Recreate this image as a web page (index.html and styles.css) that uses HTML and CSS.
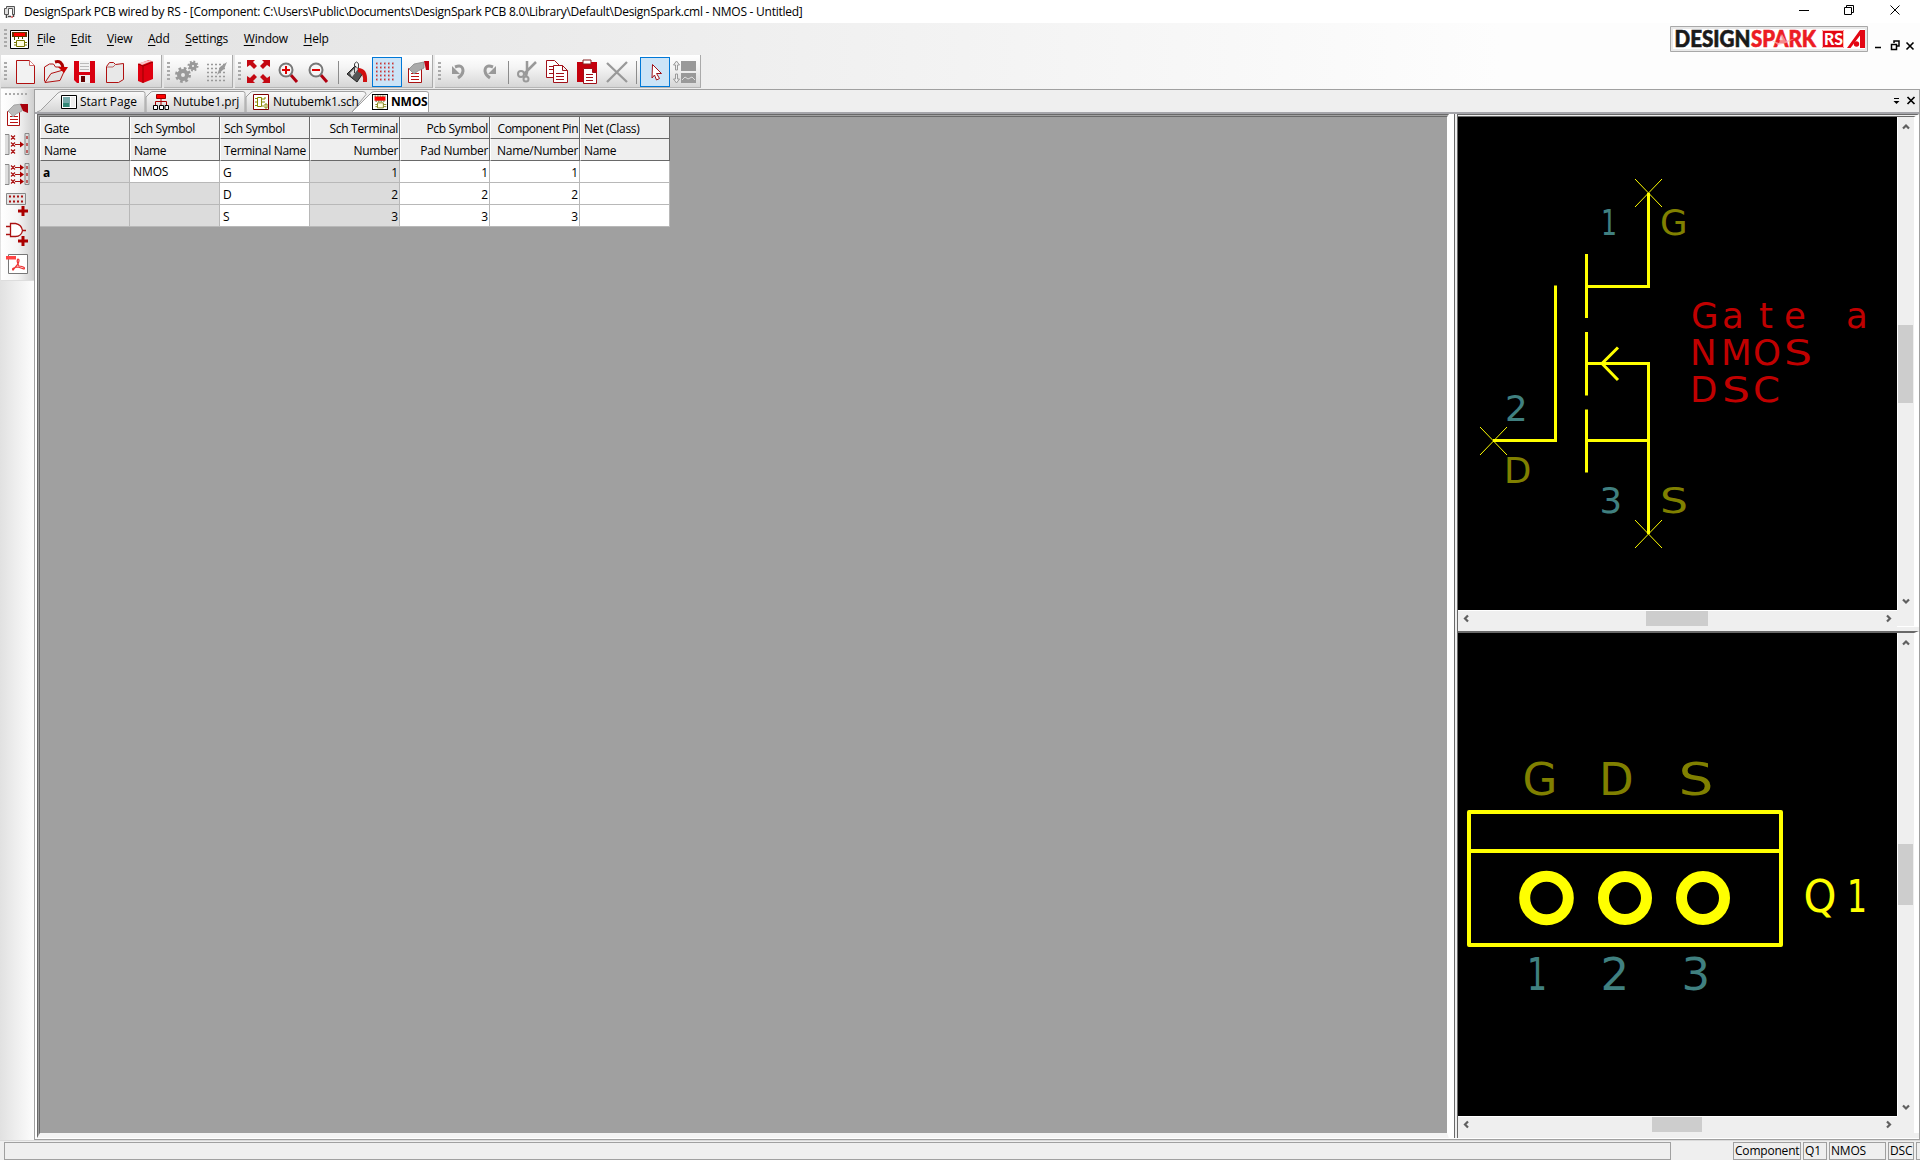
FILE: index.html
```html
<!DOCTYPE html>
<html lang="en">
<head>
<meta charset="utf-8">
<title>DesignSpark PCB</title>
<link rel="stylesheet" href="styles.css">
</head>
<body>
<header class="titlebar">
  <svg class="app-icon" viewBox="4 4 12 14"><path d="M6.500 5.500h8v8h-2v-6h-4v6h-4v-6h2z" fill="#ddd" stroke="#555"/><path d="M6.500 14v3M8 15.500h3M13.500 13v3" stroke="#444" stroke-width="1.500"/><path d="M11 16h2" stroke="#c00"/></svg>
  <span class="title-text">DesignSpark PCB wired by RS - [Component: C:\Users\Public\Documents\DesignSpark PCB 8.0\Library\Default\DesignSpark.cml - NMOS - Untitled]</span>
  <svg class="win-buttons" viewBox="1790 0 120 23" fill="none" stroke="#000"><path d="M1799 10.500h10M1844.500 7.500h7v7h-7zM1846.500 7v-1.500h7v7H1852M1890.500 5.500l9 9M1899.500 5.500l-9 9"/></svg>
</header>
<nav class="menubar">
  <i class="grip"></i>
  <svg class="doc-icon" viewBox="0 0 19 19"><path d="M.5.5h18v18H.5z" fill="#fff" stroke="#000"/><path d="M2 2h15v5H2z" fill="#630"/><path d="M4 3h11v3H4z" fill="#f00"/><path d="M4.500 7v3M8.500 7v2M12.500 7v2" stroke="#450"/><path d="M6.500 10.500h8v6h-8zM4 12.500h2M4 15h2M15 12.500h2M15 15h2" fill="#fffde0" stroke="#770"/></svg>
  <span class="mi"><u>F</u>ile</span><span class="mi"><u>E</u>dit</span><span class="mi"><u>V</u>iew</span><span class="mi"><u>A</u>dd</span><span class="mi"><u>S</u>ettings</span><span class="mi"><u>W</u>indow</span><span class="mi"><u>H</u>elp</span>
  <svg class="brand" viewBox="1670 26 198 26">
    <path d="M1670.500 26.500h197v25h-197z" fill="#e9e9e9" stroke="#a8a8a8"/><path d="M1673 29h192v20h-192z" fill="#fff"/>
    <text x="1674.500" y="47" textLength="76" lengthAdjust="spacingAndGlyphs" class="logo-a">DESIGN</text>
    <text x="1751" y="47" textLength="65" lengthAdjust="spacingAndGlyphs" class="logo-b">SPARK</text>
    <path d="M1782 34l-3 9-8-3 7 5 8-2 10-5-10 3z" fill="#f9b3b3" opacity=".7"/>
    <path d="M1822 30h22v18h-22z" fill="#e30613"/><path d="M1822.500 30.500h21v17h-21z" fill="none" stroke="#fbb"/>
    <text x="1824" y="45" textLength="19" lengthAdjust="spacingAndGlyphs" class="logo-c">RS</text>
    <path d="M1847 48l13-18h5v18h-5v-12.500l-9.500 12.500z" fill="#e30613"/><circle cx="1856.500" cy="44" r="2.700" fill="#e30613"/>
  </svg>
  <svg class="mdi-buttons" viewBox="1872 36 45 18" fill="none" stroke="#000"><path d="M1875 47.500h6M1891.500 44.500h5v5h-5zM1894 43v-2h5v5h-2" stroke-width="1.500"/><path d="M1906.500 42.500l7 7M1913.500 42.500l-7 7" stroke-width="1.600"/></svg>
</nav>
<div class="toolbars">
  <div class="band"><i class="grip"></i>
    <svg class="tb" viewBox="11 57 30 30"><path d="M16.500 60.500h13l5 5v18h-18z" fill="#f2f2f2" stroke="#b01010"/><path d="M29.500 60.500v5h5" fill="#fff" stroke="#c66"/></svg>
    <svg class="tb" viewBox="41 57 30 30"><path d="M44.500 81.500V67l5-3h4l2 3h5l3 5" fill="#eee" stroke="#b01010"/><path d="M45 82.500l6-9 14-4-5 11z" fill="#e4e4e4" stroke="#b01010"/><path d="M55 62q7-2 8 6" fill="none" stroke="#a00" stroke-width="3"/><path d="M58 67h10l-4 6z" fill="#c00"/></svg>
    <svg class="tb" viewBox="71 57 30 30"><path d="M74 61h21v22h-18l-3-3z" fill="#d90010"/><path d="M79 61h11v11h-11z" fill="#f2f2f2"/><path d="M80 63.500h9M80 66.500h9M80 69.500h9" stroke="#bbb"/><path d="M79 75h11v8h-11z" fill="#eee"/><path d="M81 76h4v6h-4z" fill="#600"/></svg>
    <svg class="tb" viewBox="101 57 30 30"><path d="M106.500 66.500l3-4h4l2 2 8-1v16l-5 3h-12z" fill="#e8e8e8" stroke="#b01010"/><path d="M107 67l6 0 2-2" fill="none" stroke="#b66"/></svg>
    <svg class="tb" viewBox="131 57 30 30"><path d="M138 64l11-4 4 2v17l-10 4-5-2z" fill="#e00010"/><path d="M138 64l5 2 10-4M143 66v17" stroke="#900" fill="none"/><path d="M139 63l11-3 2 1-10 4z" fill="#f7c6c6"/></svg>
  </div>
  <div class="band"><i class="grip"></i>
    <svg class="tb" viewBox="172 57 30 30" fill="none" stroke="#999"><circle cx="183" cy="75" r="4" stroke-width="4"/><circle cx="183" cy="75" r="6.500" stroke-width="3" stroke-dasharray="2.600 2.500"/><circle cx="193" cy="66" r="2.500" stroke-width="3"/><circle cx="193" cy="66" r="4.500" stroke-width="2" stroke-dasharray="1.800 1.700"/></svg>
    <svg class="tb" viewBox="202 57 30 30"><path d="M207 64.500h19M207 68.500h19M207 72.500h19M207 76.500h19M207 80.500h19" stroke="#999" stroke-width="1.500" stroke-dasharray="2 2"/><path d="M217 75l3-8 7-5-3 7z" fill="#999"/></svg>
  </div>
  <div class="band wide"><i class="grip"></i>
    <svg class="tb" viewBox="244 57 30 30"><path d="M247 60h8l-2 2 4 4-3 3-4-4-3 2zM270 60h-8l2 2-4 4 3 3 4-4 3 2zM247 83h8l-2-2 4-4-3-3-4 4-3-2zM270 83h-8l2-2-4-4 3-3 4 4 3-2z" fill="#c40812"/></svg>
    <svg class="tb" viewBox="274 57 30 30"><path d="M290 74l7 8" stroke="#b00010" stroke-width="3"/><circle cx="286" cy="70" r="6.500" fill="#f6f6f6" stroke="#777" stroke-width="2"/><path d="M282 70h8M286 66v8" stroke="#d00" stroke-width="2"/></svg>
    <svg class="tb" viewBox="304 57 30 30"><path d="M320 74l7 8" stroke="#b00010" stroke-width="3"/><circle cx="316" cy="70" r="6.500" fill="#f6f6f6" stroke="#777" stroke-width="2"/><path d="M312 70h8" stroke="#d00" stroke-width="2"/></svg>
    <i class="sep"></i>
    <svg class="tb" viewBox="342 57 30 30"><path d="M347 74l8-8 8 7-6 9z" fill="#555" stroke="#222"/><path d="M350 73l6-6 2 2-6 8z" fill="#ddd"/><path d="M354.500 73v-9q2-4 4 0v6" fill="none" stroke="#444"/><path d="M358 68q10 0 9 14h-4q1-9-5-10z" fill="#d01010"/></svg>
    <svg class="tb on" viewBox="372 57 30 30"><path d="M376 63.500h20M376 67.500h20M376 71.500h20M376 75.500h20M376 79.500h20" stroke="#c33" stroke-width="1.500" stroke-dasharray="1.500 2.500"/><path d="M377 62v20M381 62v20M385 62v20M389 62v20M393 62v20" stroke="#b66" stroke-width=".5" stroke-dasharray="1 1"/></svg>
    <svg class="tb" viewBox="402 57 30 30"><path d="M408.500 68.500h13v14h-13z" fill="#fff" stroke="#a11"/><path d="M411 73.500h8M411 76.500h8M411 79.500h8" stroke="#b11"/><path d="M409 69l5-5 10-2v6l-6 3-4 3-2-2z" fill="#aaa" stroke="#888" stroke-width=".8"/><path d="M424 61h5v9h-3z" fill="#c00010"/></svg>
  </div>
  <div class="band wide"><i class="grip"></i>
    <svg class="tb" viewBox="444 57 30 30"><path d="M455 67q8-3 8 4-.5 4-5 7" fill="none" stroke="#999" stroke-width="3"/><path d="M452 66v8h8z" fill="#999"/></svg>
    <svg class="tb" viewBox="474 57 30 30"><path d="M493 67q-8-3-8 4 .5 4 5 7" fill="none" stroke="#999" stroke-width="3"/><path d="M496 66v8h-8z" fill="#999"/></svg>
    <i class="sep"></i>
    <svg class="tb" viewBox="512 57 30 30" fill="none" stroke="#999"><path d="M527 61v11l-1 4M536 62l-12 12" stroke-width="2.500"/><circle cx="521" cy="74" r="3" stroke-width="2"/><circle cx="526" cy="79" r="2.500" stroke-width="2"/></svg>
    <svg class="tb" viewBox="542 57 30 30" fill="#fff" stroke="#a01018"><path d="M546.500 60.500h8l5 5v12h-13z"/><path d="M549 66.500h7M549 69.500h7M549 73.500h7" /><path d="M553.500 65.500h9l5 5v12h-14zM562.500 65.500v5h5M556 73.500h8M556 76.500h8M556 79.500h8"/></svg>
    <svg class="tb" viewBox="572 57 30 30"><path d="M577 62h20v20h-20z" fill="#c4000d"/><path d="M583 60h8v4h-8z" fill="#fff" stroke="#822"/><path d="M583.500 68.500h9l4 4v11h-13zM592.500 68.500v4h4M586 74.500h7M586 77.500h7M586 80.500h7" fill="#fff" stroke="#a01018"/></svg>
    <svg class="tb" viewBox="602 57 30 30"><path d="M607 63l20 19M627 62l-20 20" stroke="#999" stroke-width="2.300"/></svg>
    <i class="sep"></i>
    <svg class="tb on" viewBox="640 57 30 30"><path d="M652.500 64.500l9 9h-5l3 5-3 1.500-2-5-2.500 3z" fill="#fff" stroke="#a01018"/></svg>
    <svg class="tb" viewBox="670 57 30 30"><path d="M676.500 61l3 4h-2v5h-2v-5h-2zM676.500 83l3-4h-2v-5h-2v5h-2z" fill="#eee" stroke="#999"/><path d="M681 61h15v10h-15zM681 73h15v10h-15z" fill="#999"/><path d="M682 80l3-3 3 2 4-2 3 3" stroke="#ddd" fill="none"/></svg>
  </div>
</div>
<div class="main">
  <aside class="side"><div class="side-bar"><i class="hgrip"></i>
    <svg class="tb" viewBox="3 100 30 30"><path d="M7.500 111.500h12v14h-12z" fill="#fff" stroke="#a11"/><path d="M10 116.500h8M10 119.500h8M10 122.500h8" stroke="#b11"/><path d="M8 111l6-6 8-1v7l-6 3-3 3-2-3z" fill="#bbb" stroke="#999" stroke-width=".8"/><path d="M20 104h8v9l-5-2z" fill="#a8000c"/></svg>
    <svg class="tb" viewBox="3 130 30 30"><path d="M5 134.500h4v20H5M29 133.500h-4v21h4z" fill="#ddd" stroke="#888"/><path d="M11 135.500l4 4m0-4l-4 4M11 142.500l4 4m0-4l-4 4M11 149.500l4 4m0-4l-4 4M15 144.500h7M27 136v3M27 143v3M27 150v3" stroke="#a11" stroke-width="1.200"/><path d="M20 141.500l4 3-4 3z" fill="#a00"/></svg>
    <svg class="tb" viewBox="3 160 30 30"><path d="M5 164.500h4v20H5M29 163.500h-4v21h4z" fill="#ddd" stroke="#888"/><path d="M11 165.500l4 4m0-4l-4 4M11 172.500l4 4m0-4l-4 4M11 179.500l4 4m0-4l-4 4M15 167.500h7M15 174.500h7M15 181.500h7M27 166v3M27 173v3M27 180v3" stroke="#a11" stroke-width="1.200"/><path d="M20 164.500l4 3-4 3zM20 171.500l4 3-4 3zM20 178.500l4 3-4 3z" fill="#a00"/></svg>
    <svg class="tb" viewBox="3 190 30 30"><path d="M6.500 193.500h19v11h-19z" fill="#e4e4e4" stroke="#888"/><path d="M9 196.500h15M9 201.500h15" stroke="#a11" stroke-width="2" stroke-dasharray="2 2"/><path d="M18 211h10M23 206v10" stroke="#a00" stroke-width="3"/></svg>
    <svg class="tb" viewBox="3 220 30 30"><path d="M10.500 223.500h5q6 1 7 7-1 6-7 6h-5zM6 226.500h4M6 234.500h4M22 230.500h4" fill="#fff" stroke="#a11" stroke-width="1.300"/><path d="M18 241h10M23 236v10" stroke="#a00" stroke-width="3"/></svg>
    <svg class="tb" viewBox="3 250 30 30"><path d="M8.500 254.500h19v19h-19z" fill="#fff" stroke="#777"/><path d="M6 256h10v3.500H6z" fill="#f44"/><path d="M18 259q2 0 0 5l-5 6q-2-2 5-3l6 2q2-2-5-3-3-5-1-7z" fill="none" stroke="#e33" stroke-width="1.200"/></svg>
  </div></aside>
  <section class="mdi">
    <div class="tabs">
      <svg class="tab-shapes" viewBox="35 90 400 22"><defs><linearGradient id="tg" x2="0" y2="1"><stop offset="0" stop-color="#fafafa"/><stop offset="1" stop-color="#d5d5d5"/></linearGradient></defs>
        <g fill="url(#tg)" stroke="#a0a0a0"><path d="M37 112q4-1 6-4l15-15q2-1.500 4-1.500h81q2 0 2 2V112"/><path d="M146 112V97l4-4q1-1.500 3-1.500h90q2 0 2 2V112"/><path d="M246 112V97l4-4q1-1.500 3-1.500h110q3 0 3 3l-14 17.500"/></g><path d="M352 112l18-18q2-2.500 4-2.500h52q2.500 0 2.500 2V112" fill="#fff" stroke="#a0a0a0"/><path d="M352 112.500h76" stroke="#fff"/></svg>
      <div class="tab t1"><svg class="ti" viewBox="0 0 16 16"><path d="M.5 1.500h15v13H.5z" fill="#fff" stroke="#000"/><path d="M2 3h7v10H2z" fill="#7aa"/><path d="M2 9h6v4H2z" fill="#387"/><path d="M10 3h4v10h-4z" fill="#eee"/></svg><span>Start Page</span></div>
      <div class="tab t2"><svg class="ti" viewBox="0 0 16 16"><path d="M3.500.5h9v4h-9z" fill="#f00" stroke="#900"/><path d="M8 5v6M2.500 11V7.500h11V11" fill="none" stroke="#a00"/><path d="M.5 11.500h4v4h-4zM6.500 11.500h4v4h-4zM12 11.500h3.500v4H12z" fill="#fff" stroke="#000"/></svg><span>Nutube1.prj</span></div>
      <div class="tab t3"><svg class="ti" viewBox="0 0 16 16"><path d="M.5.5h15v15H.5z" fill="#fff" stroke="#800000"/><path d="M4.500 3.500h4v9h-4zM2 4.500h2M2 8h2M2 11.500h2M9 5h3V3M9 8h3M12 10h2v4h-2zM9 12h2" fill="none" stroke="#880"/></svg><span>Nutubemk1.sch</span></div>
      <div class="tab t4"><svg class="ti" viewBox="0 0 19 19"><path d="M.5.5h18v18H.5z" fill="#fff" stroke="#000" stroke-width="1.300"/><path d="M3 3h13v5H3z" fill="#f00"/><path d="M3 2.500h13M4 8.500h12" stroke="#450" stroke-dasharray="2 1"/><path d="M6.500 10.500h7v6h-7zM4 12.500h2M4 15h2M14 12.500h3M14 15h3" fill="#fffde0" stroke="#770"/></svg><b>NMOS</b></div>
      <svg class="tab-controls" viewBox="1890 94 28 14"><path d="M1894 98.500h5" stroke="#000"/><path d="M1893.500 101h6l-3 3z"/><path d="M1907.500 97l7 7M1914.500 97l-7 7" stroke="#000" stroke-width="1.700"/></svg>
    </div>
    <div class="frame">
      <div class="sheet">
        <table class="pins">
          <tr class="h"><td>Gate</td><td>Sch Symbol</td><td>Sch Symbol</td><td class="r">Sch Terminal</td><td class="r">Pcb Symbol</td><td class="r tight">Component Pin</td><td>Net (Class)</td></tr>
          <tr class="h"><td>Name</td><td>Name</td><td>Terminal Name</td><td class="r">Number</td><td class="r">Pad Number</td><td class="r">Name/Number</td><td>Name</td></tr>
          <tr><td class="g"><b>a</b></td><td class="up">NMOS</td><td>G</td><td class="g r">1</td><td class="r">1</td><td class="r">1</td><td></td></tr>
          <tr><td class="g"></td><td class="g"></td><td>D</td><td class="g r">2</td><td class="r">2</td><td class="r">2</td><td></td></tr>
          <tr><td class="g"></td><td class="g"></td><td>S</td><td class="g r">3</td><td class="r">3</td><td class="r">3</td><td></td></tr>
        </table>
      </div>
      <div class="views">
        <div class="view view-sch">
          <svg class="canvas" viewBox="1458 117 439 493">
            <g fill="none" stroke="#ff0" stroke-width="3"><path d="M1648.500 193v93.500H1586M1586.500 254v64M1586.500 332v63.500M1586.500 409.500v63M1555.500 285.500v155H1493M1588 440.500h60M1586 363.500h62.500V534"/><path d="M1618 347.500l-16 16 16 16.500" /></g>
            <path d="M1635 179l27 28M1662 179l-27 28M1480 427l27 28M1507 427l-27 28M1635 520l27 28M1662 520l-27 28" stroke="#ff0"/>
            <g class="cad"><text class="teal" x="1601" y="235" textLength="16" lengthAdjust="spacingAndGlyphs">1</text><text class="olive" x="1660" y="235">G</text><text class="teal" x="1505" y="421">2</text><text class="olive" x="1504" y="482.500">D</text><text class="teal" x="1599.500" y="513">3</text><text class="olive" x="1660" y="513" textLength="28" lengthAdjust="spacingAndGlyphs">S</text>
            <text class="red" x="1691" y="327.500">G</text><text class="red" x="1722 1759 1784 1815 1846" y="327.500">ate a</text><text class="red" x="1690 1721 1753" y="364.500">NMO</text><text class="red" x="1784" y="364.500" textLength="28" lengthAdjust="spacingAndGlyphs">S</text><text class="red" x="1690" y="402">D</text><text class="red" x="1722" y="402" textLength="28" lengthAdjust="spacingAndGlyphs">S</text><text class="red" x="1753" y="402" textLength="27" lengthAdjust="spacingAndGlyphs">C</text></g>
          </svg>
          <div class="vs"><svg viewBox="0 0 16 16"><path d="M5 10.500l3-3 3 3"/></svg><i class="thumb vt1"></i><svg viewBox="0 0 16 16"><path d="M5 5.500l3 3 3-3"/></svg></div>
          <div class="hs"><svg viewBox="0 0 16 16"><path d="M10 4.500l-3 3 3 3"/></svg><i class="thumb ht1"></i><svg viewBox="0 0 16 16"><path d="M6 4.500l3 3-3 3"/></svg></div>
          <i class="corner"></i>
        </div>
        <div class="split"></div>
        <div class="view view-pcb">
          <svg class="canvas" viewBox="1458 634 439 483">
            <g fill="none" stroke="#ff0"><path d="M1469 813h312v133h-312zM1469 852h312" stroke-width="4" stroke-linejoin="round"/><g stroke-width="11"><circle cx="1546.500" cy="899" r="21.800"/><circle cx="1625" cy="899" r="21.500"/><circle cx="1703" cy="899" r="21.500"/></g></g>
            <g class="cad big"><text class="olive" x="1522.500 1599" y="795.500">GD</text><text class="olive" x="1678.500" y="795.500" textLength="35" lengthAdjust="spacingAndGlyphs">S</text><text class="teal" x="1527" y="990.500" textLength="20" lengthAdjust="spacingAndGlyphs">1</text><text class="teal" x="1600.500 1681.500" y="990.500">23</text><text fill="#ff0" x="1803.500" y="912.500" textLength="33" lengthAdjust="spacingAndGlyphs">Q</text><text fill="#ff0" x="1847" y="912.500" textLength="20" lengthAdjust="spacingAndGlyphs">1</text></g>
          </svg>
          <div class="vs"><svg viewBox="0 0 16 16"><path d="M5 10.500l3-3 3 3"/></svg><i class="thumb vt2"></i><svg viewBox="0 0 16 16"><path d="M5 5.500l3 3 3-3"/></svg></div>
          <div class="hs"><svg viewBox="0 0 16 16"><path d="M10 4.500l-3 3 3 3"/></svg><i class="thumb ht2"></i><svg viewBox="0 0 16 16"><path d="M6 4.500l3 3-3 3"/></svg></div>
          <i class="corner"></i>
        </div>
      </div>
    </div>
  </section>
</div>
<footer class="status"><span class="cell msg"></span><span class="cell c1">Component</span><span class="cell c2">Q1</span><span class="cell c3">NMOS</span><span class="cell c4">DSC</span><span class="cell c5"></span></footer>
</body>
</html>
```
FILE: styles.css
```css
* { box-sizing: border-box; }
body { margin: 0; width: 1920px; height: 1160px; overflow: hidden; display: flex; flex-direction: column; font: 12px/16px "Open Sans", "Noto Sans", sans-serif; letter-spacing: -0.2px; color: #000; background: linear-gradient(90deg, #e1e1e1, #fdfdfd 1500px); }
svg { display: block; flex: none; }
span, b, td { white-space: nowrap; }

.titlebar { height: 23px; flex: none; background: #fff; display: flex; align-items: center; padding: 0 10px 0 4px; }
.app-icon { width: 12px; height: 14px; margin-right: 8px; }
.title-text { letter-spacing: -0.26px; }
.win-buttons { width: 120px; height: 23px; margin-left: auto; }

.menubar { height: 32px; flex: none; display: flex; align-items: center; padding: 0 3px 0 4px; }
.menubar u { text-decoration-thickness: 1px; text-underline-offset: 2px; }
.doc-icon { width: 19px; height: 19px; margin: 0 8px 0 3px; }
.mi { margin-right: 15.6px; }
.brand { width: 198px; height: 26px; margin: 0 4px 0 auto; align-self: flex-start; margin-top: 3px; }
.mdi-buttons { width: 45px; height: 18px; margin-top: 13px; align-self: flex-start; }
.logo-a, .logo-b { font: 900 22px Lato, sans-serif; letter-spacing: 0; fill: #1a1a1a; stroke: #1a1a1a; stroke-width: 0.6; }
.logo-b { fill: #ec1c24; stroke: #ec1c24; }
.logo-c { font: 900 17px Lato, sans-serif; letter-spacing: 0; fill: #fff; }

.grip { width: 3px; height: 20px; background: repeating-linear-gradient(180deg, #aaa 0 2px, transparent 2px 4px); flex: none; }
.toolbars { height: 34px; flex: none; display: flex; gap: 2px; padding-left: 1px; }
.band { height: 33px; display: flex; align-items: center; padding: 2px 0 0 3px; background: linear-gradient(180deg, #fff, #f4f4f4 40%, #d6d6d6); border-right: 1px solid #aaa; border-bottom: 1px solid #b5b5b5; }
.band .grip { margin-right: 4px; }
.band + .band .grip { margin-right: 2px; }
.band + .wide .grip { margin-right: 3px; }
.tb { width: 30px; height: 30px; }
.tb.on { background: #cce4f7; outline: 1px solid #0078d7; outline-offset: -1px; }
.sep { width: 1px; height: 23px; background: #8c8c8c; margin: 0 3px 0 4px; }

.main { height: 1051px; flex: none; display: flex; }
.side { width: 34px; flex: none; background: linear-gradient(90deg, #e1e1e1, #fdfdfd); }
.side-bar { margin-left: 1px; width: 33px; height: 192px; background: linear-gradient(90deg, #fff, #f5f5f5 50%, #cfcfcf); padding: 4px 0 0 2px; border-bottom: 1px solid #ddd; }
.hgrip { display: block; width: 23px; height: 2px; margin: 0 0 5px 2px; background: repeating-linear-gradient(90deg, #aaa 0 2px, transparent 2px 4px); }

.mdi { flex: 1; display: flex; flex-direction: column; background: #fff; border: 1px solid #a0a0a0; }
.tabs { height: 22px; flex: none; position: relative; display: flex; background: #efefef; }
.tab-shapes { position: absolute; left: 0; top: 0; width: 400px; height: 22px; }
.tab { position: relative; display: flex; align-items: center; gap: 4px; padding-top: 1px; }
.t1 { width: 111px; padding-left: 26px; letter-spacing: 0; }
.t1 span { margin-left: -1px; }
.t2 { width: 100px; padding-left: 7px; letter-spacing: -0.1px; }
.t3 { width: 119px; padding-left: 7px; }
.t4 { padding-left: 7px; gap: 3px; }
.ti { width: 16px; height: 16px; }
.tab-controls { width: 28px; height: 14px; margin: 4px 1px 0 auto; }

.frame { height: 1026px; flex: none; display: flex; border-top: 2px solid #a5a5aa; padding-left: 2px; }
.sheet { width: 1412px; background: #a0a0a0; border: solid #696969; border-width: 3px 2px 5px 3px; border-style: double solid solid double; border-right-color: #fff; border-bottom-color: #f4f4f4; }
.pins { border-collapse: separate; border-spacing: 0; table-layout: fixed; width: 630px; letter-spacing: -0.1px; }
.pins td { width: 90px; height: 22px; padding: 2px 2px 0 3px; line-height: 16px; background: #fff; border: solid #b8b8b8; border-width: 0 1px 1px 0; }
.pins .h td { background: #efefef; border-color: #696969; border-left: 1px solid #fff; padding: 3px 1px 0 3px; letter-spacing: -0.32px; }
.pins .r { text-align: right; padding-right: 1px; }
.pins .h .tight { letter-spacing: -0.5px; }
.pins td.g { background: #dcdcdc; }
.pins .up { padding-bottom: 2px; }

.views { flex: 1; margin-left: 5px; border-left: 4px double #696969; display: flex; flex-direction: column; background: #efefef; }
.view { display: grid; grid-template-columns: 439px 17px; grid-template-rows: 1fr 17px; border-top: 3px double #696969; border-right: 5px solid #fff; }
.view-sch { height: 513px; }
.view-pcb { height: 502px; border-top: 2px solid #696969; }
.split { height: 5px; background: #efefef; border-top: 1px solid #fff; margin-top: -1px; }
.canvas { width: 439px; height: 100%; background: #000; }
.vs, .hs { display: flex; justify-content: space-between; background: #efefef; position: relative; }
.vs { flex-direction: column; border-left: 1px solid #fff; padding-top: 1px; }
.hs { border-top: 1px solid #fff; }
.vs svg, .hs svg { width: 16px; height: 16px; fill: none; stroke: #606060; stroke-width: 2.2; }
.corner { background: #efefef; }
.thumb { position: absolute; background: #cdcdcd; }
.vt1 { left: 0; top: 208px; width: 15px; height: 78px; }
.ht1 { left: 188px; top: 0; width: 62px; height: 15px; }
.vt2 { left: 0; top: 211px; width: 15px; height: 61px; }
.ht2 { left: 194px; top: 0; width: 50px; height: 15px; }

.cad { font: 35.6px "DejaVu Sans", sans-serif; letter-spacing: 0; }
.big { font-size: 45px; }
.teal { fill: #408080; }
.olive { fill: #808000; }
.red { fill: #c00000; }

.status { flex: 1; background: #efefef; border-top: 1px solid #dadada; display: flex; gap: 2px; padding: 1px 0 0 4px; }
.cell { height: 18px; flex: none; border: 1px solid #a0a0a0; padding-left: 1px; overflow: hidden; }
.msg { width: 1667px; margin-right: 60px; }
.c1 { width: 68px; }
.c2 { width: 24px; }
.c3 { width: 57px; }
.c4 { width: 26px; }
.c5 { width: 8px; }
```
